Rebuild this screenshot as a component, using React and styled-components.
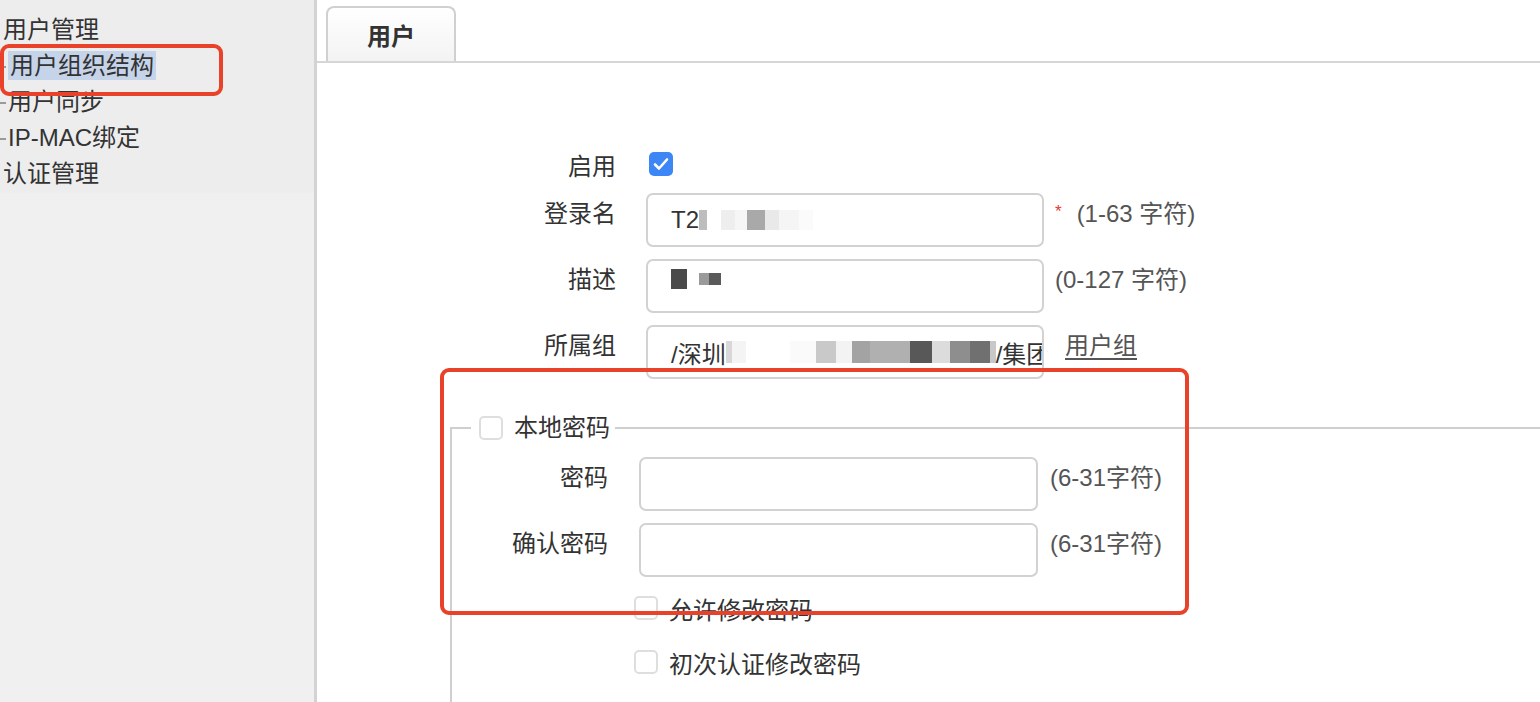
import styled, { createGlobalStyle } from "styled-components";

const GlobalStyle = createGlobalStyle`
  html, body {
    margin: 0;
    padding: 0;
    background: #fff;
  }
  body {
    font-family: "Liberation Sans", "Noto Sans CJK SC", sans-serif;
    color: #333;
  }
`;

const Page = styled.div`
  position: relative;
  width: 1540px;
  height: 702px;
  overflow: hidden;
  display: flex;
  font-size: 24px;
`;

const Sidebar = styled.aside`
  width: 314px;
  flex: none;
  background: #f0f0f0;
  border-right: 3px solid #d3d3d3;
`;

const Tree = styled.ul`
  list-style: none;
  margin: 0;
  padding: 12px 0 1px;
  background: #ededed;
`;

const TreeItem = styled.li`
  position: relative;
  height: 36px;
  line-height: 36px;
  padding-left: ${(p) => (p.$child ? "8px" : "3px")};
  color: #333;
  white-space: nowrap;

  &::before {
    content: "";
    display: ${(p) => (p.$child ? "block" : "none")};
    position: absolute;
    left: 0;
    top: 18px;
    width: 6px;
    height: 2px;
    background: #9a9a9a;
  }
`;

const TreeLabel = styled.span`
  display: inline-block;
  line-height: 29px;
  padding: 0 2px;
  background: ${(p) => (p.$selected ? "#c6d4ea" : "transparent")};
`;

const Main = styled.main`
  flex: 1;
  display: flex;
  flex-direction: column;
  min-width: 0;
`;

const TabBar = styled.div`
  display: flex;
  padding: 6px 0 0 9px;
  border-bottom: 2px solid #d6d6d6;
`;

const Tab = styled.div`
  width: 130px;
  height: 55px;
  box-sizing: border-box;
  border: 2px solid #d0d0d0;
  border-bottom: none;
  border-radius: 8px 8px 0 0;
  background: linear-gradient(#ffffff, #f3f3f3);
  display: flex;
  align-items: center;
  justify-content: center;
  font-weight: 700;
  font-size: 24px;
  color: #333;
`;

const Form = styled.div`
  display: flex;
  flex-direction: column;
  gap: 12px;
  padding-top: 82px;
`;

const Row = styled.div`
  display: flex;
  align-items: flex-start;
  height: ${(p) => (p.$short ? "36px" : "54px")};
`;

const Label = styled.div`
  width: ${(p) => p.$width}px;
  flex: none;
  box-sizing: border-box;
  text-align: right;
  line-height: 36px;
  padding-top: ${(p) => (p.$flat ? "4px" : "3px")};
  margin-right: ${(p) => p.$gap}px;
  color: #333;
`;

const Field = styled.div`
  width: ${(p) => p.$width}px;
  height: 54px;
  flex: none;
  box-sizing: border-box;
  border: 2px solid #d2d2d2;
  border-radius: 7px;
  background: #fff;
  padding: 0 23px;
  display: flex;
  align-items: center;
  overflow: hidden;
  white-space: nowrap;
  color: #333;
`;

const Hint = styled.span`
  line-height: 36px;
  padding-top: 3px;
  margin-left: ${(p) => p.$gap}px;
  color: #555;
  white-space: nowrap;
`;

const Required = styled.span`
  color: #e53935;
  font-size: 17px;
  line-height: 17px;
  padding-top: 10px;
  margin-left: 11px;
  margin-right: -2px;
`;

const GroupLink = styled.a`
  line-height: 36px;
  padding-top: 3px;
  margin-left: 21px;
  color: #555;
  text-decoration: underline;
  text-underline-offset: 4px;
  cursor: pointer;
`;

const Check = styled.span`
  width: 24px;
  height: 24px;
  flex: none;
  box-sizing: border-box;
  border-radius: 5px;
  border: ${(p) => (p.$checked ? "none" : "2px solid #dedede")};
  background: ${(p) => (p.$checked ? "#3d86f5" : "#fff")};
  display: inline-flex;
  align-items: center;
  justify-content: center;
`;

const CheckWrap = styled.div`
  height: 38px;
  display: flex;
  align-items: center;
`;

const Mosaic = styled.span`
  display: inline-flex;
  align-items: center;
  flex: none;
  margin-top: ${(p) => p.$offset || 0}px;
`;

const Block = styled.span`
  display: inline-block;
  width: ${(p) => p.$w}px;
  height: ${(p) => p.$h || 20}px;
  background: ${(p) => p.$c};
`;

const Fieldset = styled.fieldset`
  margin: 31px 0 0 133px;
  padding: 11px 0 0 0;
  border: 2px solid #cfcfcf;
  border-right: none;
  border-bottom: none;
  min-width: 0;
  flex: 1;
  display: flex;
  flex-direction: column;
  gap: 12px;
`;

const Legend = styled.legend`
  margin-left: 19px;
  padding: 0 5px 0 8px;
  display: flex;
  align-items: center;
  gap: 11px;
  line-height: 36px;
  color: #333;
`;

const OptionRow = styled.label`
  display: flex;
  align-items: center;
  gap: 11px;
  height: 54px;
  margin-left: 182px;
  color: #333;
`;

const OptionList = styled.div`
  display: flex;
  flex-direction: column;
  margin-top: -8px;
`;

const Annotation = styled.div`
  position: absolute;
  left: ${(p) => p.$x}px;
  top: ${(p) => p.$y}px;
  width: ${(p) => p.$w}px;
  height: ${(p) => p.$h}px;
  box-sizing: border-box;
  border: 4px solid #e8432a;
  border-radius: 9px;
  pointer-events: none;
`;

const CheckMark = () => (
  <svg width="16" height="14" viewBox="0 0 16 14">
    <path d="M2 7.5 L6 11.5 L14 2.5" fill="none" stroke="#fff" strokeWidth="2.6" strokeLinecap="round" strokeLinejoin="round" />
  </svg>
);

const loginMosaic = [
  [8, "#bdbdbd"], [14, "#fff"], [14, "#eeeeee"], [12, "#f6f6f6"], [18, "#a9a9a9"], [14, "#e9e9e9"], [20, "#f5f5f5"], [14, "#fbfbfb"],
];

const groupMosaic = [
  [6, "#d8d8d8"], [14, "#f4f4f4"], [44, "#fff"], [26, "#fafafa"], [20, "#c9c9c9"], [16, "#f3f3f3"], [18, "#a3a3a3"], [40, "#b0b0b0"],
  [22, "#585858"], [18, "#dcdcdc"], [20, "#8e8e8e"], [20, "#707070"], [6, "#c8c8c8"],
];

export default function App() {
  return (
    <>
      <GlobalStyle />
      <Page>
        <Sidebar>
          <Tree>
            <TreeItem>用户管理</TreeItem>
            <TreeItem $child>
              <TreeLabel $selected>用户组织结构</TreeLabel>
            </TreeItem>
            <TreeItem $child>用户同步</TreeItem>
            <TreeItem $child>IP-MAC绑定</TreeItem>
            <TreeItem>认证管理</TreeItem>
          </Tree>
        </Sidebar>

        <Main>
          <TabBar>
            <Tab>用户</Tab>
          </TabBar>

          <Form>
            <Row $short>
              <Label $width={299} $gap={33} $flat>启用</Label>
              <CheckWrap>
                <Check $checked>
                  <CheckMark />
                </Check>
              </CheckWrap>
            </Row>

            <Row>
              <Label $width={299} $gap={30}>登录名</Label>
              <Field $width={398}>
                T2
                <Mosaic>
                  {loginMosaic.map(([w, c], i) => (
                    <Block key={i} $w={w} $c={c} />
                  ))}
                </Mosaic>
              </Field>
              <Required>*</Required>
              <Hint $gap={17}>(1-63 字符)</Hint>
            </Row>

            <Row>
              <Label $width={299} $gap={30}>描述</Label>
              <Field $width={398}>
                <Mosaic $offset={-14}>
                  <Block $w={16} $h={20} $c="#4a4a4a" />
                  <Block $w={12} $h={12} $c="#fff" />
                  <Block $w={10} $h={12} $c="#9a9a9a" />
                  <Block $w={12} $h={12} $c="#5a5a5a" />
                </Mosaic>
              </Field>
              <Hint $gap={11}>(0-127 字符)</Hint>
            </Row>

            <Row>
              <Label $width={299} $gap={30}>所属组</Label>
              <Field $width={398}>
                /深圳
                <Mosaic>
                  {groupMosaic.map(([w, c], i) => (
                    <Block key={i} $w={w} $h={22} $c={c} />
                  ))}
                </Mosaic>
                /集团
              </Field>
              <GroupLink>用户组</GroupLink>
            </Row>
          </Form>

          <Fieldset>
            <Legend>
              <Check />
              本地密码
            </Legend>

            <Row>
              <Label $width={156} $gap={31}>密码</Label>
              <Field $width={399} />
              <Hint $gap={12}>(6-31字符)</Hint>
            </Row>

            <Row>
              <Label $width={156} $gap={31}>确认密码</Label>
              <Field $width={399} />
              <Hint $gap={12}>(6-31字符)</Hint>
            </Row>

            <OptionList>
              <OptionRow>
                <Check />
                允许修改密码
              </OptionRow>
              <OptionRow>
                <Check />
                初次认证修改密码
              </OptionRow>
            </OptionList>
          </Fieldset>
        </Main>

        <Annotation $x={0} $y={44} $w={223} $h={52} />
        <Annotation $x={440} $y={368} $w={749} $h={247} />
      </Page>
    </>
  );
}
